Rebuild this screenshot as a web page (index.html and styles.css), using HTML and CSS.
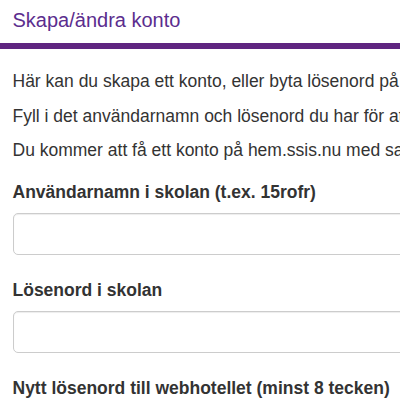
FILE: index.html
```html
<!DOCTYPE html>
<html lang="sv">
<head>
<meta charset="utf-8">
<title>Skapa/ändra konto</title>
<link rel="stylesheet" href="styles.css">
</head>
<body>
<div class="page">
  <header class="head">
    <h1 class="title">Skapa/ändra konto</h1>
  </header>
  <main class="content">
    <p class="intro">Här kan du skapa ett konto, eller byta lösenord på ditt konto på webhotellet.</p>
    <p class="intro">Fyll i det användarnamn och lösenord du har för att logga in i skolan.</p>
    <p class="intro">Du kommer att få ett konto på hem.ssis.nu med samma användarnamn.</p>
    <form class="form">
      <div class="group">
        <label class="label" for="u">Användarnamn i skolan (t.ex. 15rofr)</label>
        <input class="input" id="u" type="text">
      </div>
      <div class="group">
        <label class="label" for="p">Lösenord i skolan</label>
        <input class="input" id="p" type="password">
      </div>
      <div class="group">
        <label class="label" for="n">Nytt lösenord till webhotellet (minst 8 tecken)</label>
        <input class="input" id="n" type="password">
      </div>
    </form>
  </main>
</div>
</body>
</html>
```

FILE: styles.css
```css
html, body {
  margin: 0;
  padding: 0;
  background: #fff;
  overflow: hidden;
}
.page {
  width: 700px;
  font-family: "Liberation Sans", Arial, sans-serif;
  color: #333;
}
.head {
  height: 43px;
  box-sizing: content-box;
  border-bottom: 6px solid #5f2580;
  padding: 0 12.5px;
}
.title {
  margin: 0;
  padding-top: 8.5px;
  font-size: 20px;
  line-height: 22px;
  font-weight: normal;
  color: #5b2d8e;
  white-space: nowrap;
}
.content {
  padding: 20px 12.5px 0;
}
.intro {
  margin: 0 0 9.5px;
  font-size: 17.5px;
  line-height: 25px;
  white-space: nowrap;
}
.form {
  margin: 0;
  padding-top: 7.5px;
  display: flex;
  flex-direction: column;
  gap: 23px;
}
.group {
  display: flex;
  flex-direction: column;
  gap: 8px;
}
.label {
  font-size: 17.5px;
  line-height: 25px;
  font-weight: bold;
  white-space: nowrap;
}
.input {
  box-sizing: border-box;
  width: 600px;
  height: 42px;
  margin: 0;
  border: 1px solid #ccc;
  border-radius: 5px;
  box-shadow: inset 0 1px 1px rgba(0,0,0,.075);
  background: #fff;
  font: inherit;
}
```
